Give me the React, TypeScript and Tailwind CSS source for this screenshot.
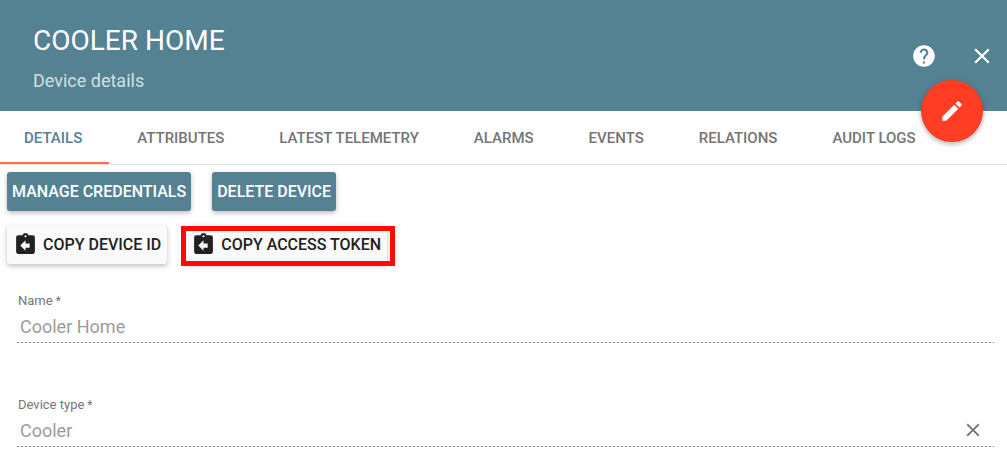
import { useState } from 'react';
import { MdAssignmentReturn, MdClose, MdEdit, MdHelp } from 'react-icons/md';

const tabs = ['DETAILS', 'ATTRIBUTES', 'LATEST TELEMETRY', 'ALARMS', 'EVENTS', 'RELATIONS', 'AUDIT LOGS'];

const raised =
  'flex h-[39px] items-center whitespace-nowrap rounded-[3px] text-[16px] font-medium shadow-[0_2px_5px_0_rgba(0,0,0,0.26)]';

function DottedLine() {
  return (
    <div className="h-px bg-[repeating-linear-gradient(90deg,#8c8c8c_0px,#8c8c8c_2px,#e8e8e8_2px,#e8e8e8_4px)]" />
  );
}

function Field({ id, label, value, clearable }: { id: string; label: string; value: string; clearable?: boolean }) {
  return (
    <div>
      <label htmlFor={id} className="flex h-5 items-center gap-[3px] pl-px text-[13px] text-[#757575]">
        {label}
        <span className="text-[12px]">*</span>
      </label>
      <div className="flex h-[30px] items-center">
        <input
          id={id}
          defaultValue={value}
          disabled
          className="h-[30px] min-w-0 flex-1 bg-transparent pl-[3px] text-[18px] text-[#9c9c9c]"
        />
        {clearable && (
          <button type="button" aria-label="Clear" className="mr-[10px] text-[#757575]">
            <MdClose size={22} />
          </button>
        )}
      </div>
      <div className="pt-px">
        <DottedLine />
      </div>
    </div>
  );
}

export default function App() {
  const [active, setActive] = useState('DETAILS');
  return (
    <main className="min-h-screen bg-white font-['Roboto','Liberation_Sans',sans-serif] text-[#212121]">
      <header className="relative flex h-[111px] justify-between bg-[#548293] pl-[33px] pr-3 text-white">
        <div className="pt-[23px]">
          <h1 className="text-[28px] leading-9">COOLER HOME</h1>
          <p className="mt-[10px] text-[18px] leading-6 text-white/75">Device details</p>
        </div>
        <div className="flex items-center gap-8">
          <button type="button" aria-label="Help">
            <MdHelp size={26} />
          </button>
          <button type="button" aria-label="Close">
            <MdClose size={26} />
          </button>
        </div>
        <button
          type="button"
          aria-label="Edit device"
          className="absolute -bottom-[31px] right-6 z-10 flex size-[62px] items-center justify-center rounded-full bg-[#ff3d22] shadow-[0_2px_5px_0_rgba(0,0,0,0.32)]"
        >
          <MdEdit size={26} />
        </button>
      </header>

      <nav className="flex h-[54px] gap-px border-b border-[#dfdfdf]" role="tablist">
        {tabs.map((tab) => (
          <button
            key={tab}
            type="button"
            role="tab"
            aria-selected={active === tab}
            onClick={() => setActive(tab)}
            className={
              active === tab
                ? 'whitespace-nowrap border-b-2 border-[#ff6e4e] px-[27px] pt-1 text-[15px] font-medium text-[#548293] first:pl-6'
                : 'whitespace-nowrap border-b-2 border-transparent px-[27px] pt-1 text-[15px] font-medium text-[#757575] first:pl-6'
            }
          >
            {tab}
          </button>
        ))}
      </nav>

      <section className="flex flex-col gap-[14px] pl-[7px] pt-[7px]">
        <div className="flex gap-[21px]">
          <button type="button" className={`${raised} bg-[#548293] px-[5px] text-white`}>
            MANAGE CREDENTIALS
          </button>
          <button type="button" className={`${raised} bg-[#548293] px-[5px] text-white`}>
            DELETE DEVICE
          </button>
        </div>
        <div className="flex gap-[18px]">
          <button type="button" className={`${raised} gap-[5px] bg-[#fafafa] px-[6px]`}>
            <MdAssignmentReturn size={25} />
            COPY DEVICE ID
          </button>
          <div className="relative">
            <button type="button" className={`${raised} gap-[5px] bg-[#fafafa] px-[6px]`}>
              <MdAssignmentReturn size={25} />
              COPY ACCESS TOKEN
            </button>
            <div className="pointer-events-none absolute -bottom-[2px] -left-1 -right-2 top-px border-[5px] border-[#ff0a00]" />
          </div>
        </div>
      </section>

      <form className="flex flex-col gap-[52px] pl-[17px] pr-[13px] pt-[27px]">
        <Field id="name" label="Name" value="Cooler Home" />
        <Field id="type" label="Device type" value="Cooler" clearable />
      </form>
    </main>
  );
}
